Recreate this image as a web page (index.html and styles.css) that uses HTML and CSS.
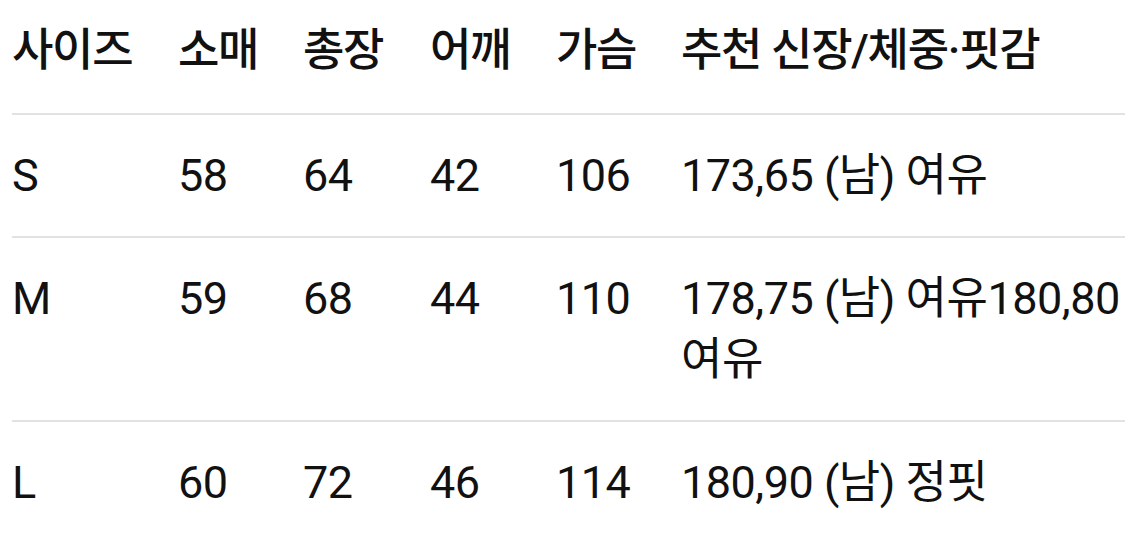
FILE: index.html
```html
<!DOCTYPE html>
<html lang="ko">
<head>
<meta charset="utf-8">
<title>사이즈표</title>
<link rel="stylesheet" href="styles.css">
</head>
<body>
<div class="wrap">
  <table class="size-table">
    <colgroup>
      <col class="col-size">
      <col class="col-sleeve">
      <col class="col-length">
      <col class="col-shoulder">
      <col class="col-chest">
      <col class="col-rec">
    </colgroup>
    <thead>
      <tr>
        <th>사이즈</th>
        <th>소매</th>
        <th>총장</th>
        <th>어깨</th>
        <th>가슴</th>
        <th>추천 신장/체중·핏감</th>
      </tr>
    </thead>
    <tbody>
      <tr>
        <td>S</td>
        <td>58</td>
        <td>64</td>
        <td>42</td>
        <td>106</td>
        <td class="rec">173,65 (남) 여유</td>
      </tr>
      <tr>
        <td>M</td>
        <td>59</td>
        <td>68</td>
        <td>44</td>
        <td>110</td>
        <td class="rec">178,75 (남) 여유180,80 여유</td>
      </tr>
      <tr>
        <td>L</td>
        <td>60</td>
        <td>72</td>
        <td>46</td>
        <td>114</td>
        <td class="rec">180,90 (남) 정핏</td>
      </tr>
    </tbody>
  </table>
</div>
</body>
</html>
```
FILE: styles.css
```css
html, body {
  margin: 0;
  padding: 0;
  background: #ffffff;
}

.wrap {
  padding-left: 12px;
  overflow: hidden;
  height: 541px;
}

.size-table {
  border-collapse: collapse;
  table-layout: fixed;
  width: 1150px;
  font-family: Roboto, "Noto Sans CJK KR", sans-serif;
  font-feature-settings: "palt";
  font-size: 45px;
  color: #111111;
}

.col-size { width: 166px; }
.col-sleeve { width: 125px; }
.col-length { width: 127px; }
.col-shoulder { width: 126px; }
.col-chest { width: 125px; }

.size-table th,
.size-table td {
  text-align: left;
  vertical-align: top;
  padding: 30px 0;
  line-height: 61px;
  border-bottom: 2px solid #e2e2e2;
  white-space: normal;
}

.size-table th {
  font-weight: 500;
  letter-spacing: -1.3px;
  padding-top: 20px;
  padding-bottom: 32px;
}

.size-table td {
  font-weight: 400;
  letter-spacing: -0.5px;
}

.size-table tbody tr:last-child td {
  border-bottom: none;
}

.rec {
  word-break: keep-all;
}
```
